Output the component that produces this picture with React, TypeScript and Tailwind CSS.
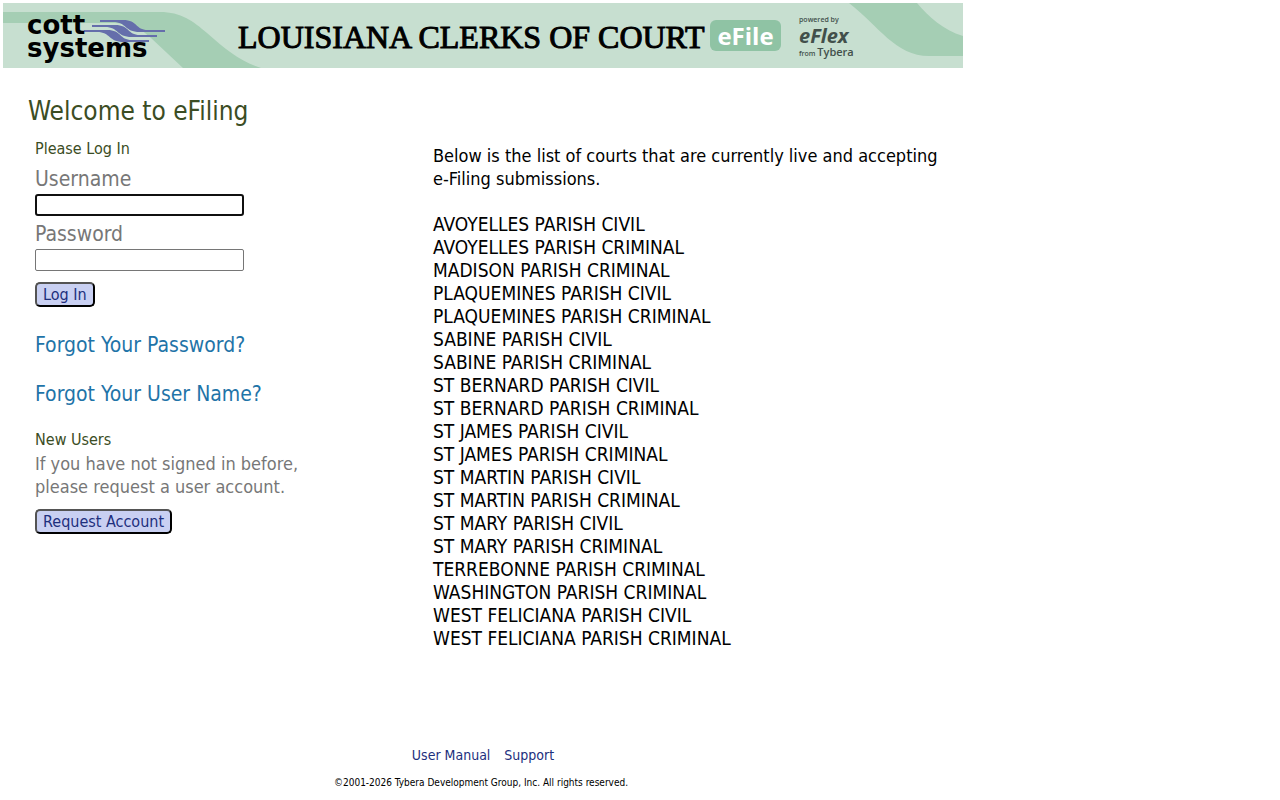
import { useState } from 'react'

const courts = [
  'AVOYELLES PARISH CIVIL',
  'AVOYELLES PARISH CRIMINAL',
  'MADISON PARISH CRIMINAL',
  'PLAQUEMINES PARISH CIVIL',
  'PLAQUEMINES PARISH CRIMINAL',
  'SABINE PARISH CIVIL',
  'SABINE PARISH CRIMINAL',
  'ST BERNARD PARISH CIVIL',
  'ST BERNARD PARISH CRIMINAL',
  'ST JAMES PARISH CIVIL',
  'ST JAMES PARISH CRIMINAL',
  'ST MARTIN PARISH CIVIL',
  'ST MARTIN PARISH CRIMINAL',
  'ST MARY PARISH CIVIL',
  'ST MARY PARISH CRIMINAL',
  'TERREBONNE PARISH CRIMINAL',
  'WASHINGTON PARISH CRIMINAL',
  'WEST FELICIANA PARISH CIVIL',
  'WEST FELICIANA PARISH CRIMINAL',
]

const buttonClass =
  'h-[25px] self-start rounded-[5px] border-2 border-black [border-style:outset] bg-[#c9d0f2] px-1.5 text-base leading-5 text-[#1d2f7d]'

function Banner() {
  return (
    <header className="relative flex h-[65px] items-center overflow-hidden bg-[#c7dfd0]">
      <svg
        className="absolute inset-0 h-full w-full"
        viewBox="0 0 960 65"
        preserveAspectRatio="none"
        fill="#a5ceb4"
        aria-hidden="true"
      >
        <path d="M0 9H157C178 9 190 18 204 30C223 47 237 58 258 65H180L148 35C136 24 127 20 108 20H0Z" />
        <path d="M846 0H914C926 14 940 27 960 33V53H926C892 53 876 23 846 0Z" />
      </svg>
      <div className="relative flex w-full items-center pl-6">
        <CottLogo />
        <h1 className="ml-[71px] w-[464px] pt-0.5 font-['Liberation_Serif',serif] text-[32px] leading-10 whitespace-nowrap text-black [-webkit-text-stroke:1px_black]">
          LOUISIANA CLERKS OF COURT
        </h1>
        <span className="ml-2 flex h-[31px] w-[71px] shrink-0 items-center justify-center rounded-md bg-[#8fc3a4] font-['Open_Sans',sans-serif] text-2xl font-bold text-white">
          eFile
        </span>
        <div className="ml-[18px] pt-[3px] font-['Open_Sans',sans-serif] font-semibold whitespace-nowrap text-[#42504b]">
          <p className="text-[7px] leading-3">powered by</p>
          <p className="text-xl leading-5 font-bold italic">eFlex</p>
          <p className="text-[7px] leading-3">
            from <span className="text-[11px]">Tybera</span>
          </p>
        </div>
      </div>
    </header>
  )
}

function CottLogo() {
  return (
    <div className="relative w-[140px] shrink-0 pt-0.5 font-['DejaVu_Sans',sans-serif] text-[26px] leading-[23px] font-bold text-black">
      <svg
        className="absolute top-[7px] left-[56px] h-[23px] w-[82px]"
        viewBox="0 5 82 23"
        fill="#656eab"
        aria-hidden="true"
      >
        <path d="M17 6H40C55 6 52 16 65 16H82V18H57C41 18 44 8 30 8H17Z" />
        <path d="M9 11H32C47 11 44 21 57 21H74V23H49C33 23 36 13 22 13H9Z" />
        <path d="M1 16H24C39 16 36 26 49 26H66V28H41C25 28 28 18 14 18H1Z" />
      </svg>
      <p className="relative">cott</p>
      <p className="relative">systems</p>
    </div>
  )
}

export default function App() {
  const [username, setUsername] = useState('')
  const [password, setPassword] = useState('')

  return (
    <div className="max-w-[966px] bg-white p-[3px] font-['DejaVu_Sans_Condensed','Noto_Sans',sans-serif]">
      <Banner />
      <main className="flex pt-[25px]">
        <div className="w-[430px] shrink-0">
          <h2 className="pl-[25px] text-[26px] leading-9 text-[#3b4d24]">
            Welcome to eFiling
          </h2>
          <div className="flex flex-col pt-2 pl-8">
            <form
              className="flex flex-col"
              onSubmit={(e) => e.preventDefault()}
            >
              <h3 className="text-base leading-6 text-[#3b4d24]">
                Please Log In
              </h3>
              <label
                htmlFor="username"
                className="mt-1.5 text-[21px] leading-6 text-[#777777]"
              >
                Username
              </label>
              <input
                id="username"
                type="text"
                value={username}
                onChange={(e) => setUsername(e.target.value)}
                className="mt-[3px] h-[22px] w-[209px] rounded-[3px] border-2 border-[#101010] px-1 text-sm outline-none"
              />
              <label
                htmlFor="password"
                className="mt-1.5 text-[21px] leading-6 text-[#777777]"
              >
                Password
              </label>
              <input
                id="password"
                type="password"
                value={password}
                onChange={(e) => setPassword(e.target.value)}
                className="mt-[3px] h-[22px] w-[209px] rounded-[2px] border border-[#767676] px-1 text-sm"
              />
              <button type="submit" className={`mt-[11px] ${buttonClass}`}>
                Log In
              </button>
            </form>
            <a
              href="#forgot-password"
              className="mt-[26px] self-start text-[21px] leading-6 text-[#1f74a8]"
            >
              Forgot Your Password?
            </a>
            <a
              href="#forgot-username"
              className="mt-[25px] self-start text-[21px] leading-6 text-[#1f74a8]"
            >
              Forgot Your User Name?
            </a>
            <h3 className="mt-[22px] text-base leading-6 text-[#3b4d24]">
              New Users
            </h3>
            <p className="text-lg leading-[23px] text-[#777777]">
              If you have not signed in before,
              <br />
              please request a user account.
            </p>
            <button type="button" className={`mt-[11px] ${buttonClass}`}>
              Request Account
            </button>
          </div>
        </div>
        <section className="pt-[51px] pr-4 text-black">
          <p className="text-lg leading-[23px]">
            Below is the list of courts that are currently live and accepting
            e-Filing submissions.
          </p>
          <ul className="mt-[23px] text-[19px] leading-[23px]">
            {courts.map((court) => (
              <li key={court}>{court}</li>
            ))}
          </ul>
        </section>
      </main>
      <footer className="pt-[93px] pr-1 text-center">
        <nav className="flex justify-center gap-3.5 pl-1 text-sm leading-6 text-[#1d2f7d]">
          <a href="#manual">User Manual</a>
          <a href="#support">Support</a>
        </nav>
        <p className="mt-2 text-[10px] leading-4 text-black">
          ©2001-2026 Tybera Development Group, Inc. All rights reserved.
        </p>
      </footer>
    </div>
  )
}
